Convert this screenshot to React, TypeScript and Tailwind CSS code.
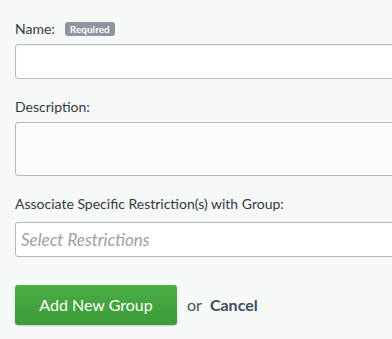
export default function App() {
  return (
    <div
      className="min-h-screen overflow-hidden bg-[#f7f8f8] pl-[15px] pt-[20px] text-[#333a40]"
      style={{ fontFamily: "Lato, 'Open Sans', sans-serif" }}
    >
      <form className="w-[400px]">
        <div className="flex h-[18px] items-center gap-[10px] text-[14px] leading-[18px]">
          <label>Name:</label>
          <span className="rounded-[3px] bg-[#8d969e] px-[5px] text-[10px] font-bold leading-[14px] text-white">
            Required
          </span>
        </div>
        <input
          type="text"
          className="mt-[6px] block h-[35px] w-full rounded-[3px] border border-[#b3b9bd] bg-white shadow-[inset_0_1px_2px_rgba(0,0,0,0.06)]"
        />

        <label className="mt-[19px] block h-[18px] text-[14px] leading-[18px]">Description:</label>
        <textarea className="mt-[6px] block h-[54px] w-full resize-none rounded-[3px] border border-[#b3b9bd] bg-[#fafbfb]" />

        <label className="mt-[19px] block h-[18px] text-[14px] leading-[18px]">
          Associate Specific Restriction(s) with Group:
        </label>
        <div className="mt-[9px] flex h-[35px] w-full items-center rounded-[3px] border border-[#b3b9bd] bg-white px-[5px]">
          <span className="text-[17px] italic text-[#9aa1a6]">Select Restrictions</span>
        </div>

        <div className="mt-[28px] flex items-center">
          <button
            type="button"
            className="h-[40px] w-[162px] rounded-[3px] bg-gradient-to-b from-[#4bae46] to-[#3c9a37] text-[16px] text-white shadow-[0_1px_2px_rgba(0,0,0,0.2)]"
          >
            Add New Group
          </button>
          <span className="ml-[10px] text-[16px] text-[#4a5058]">or</span>
          <a className="ml-[8px] text-[16px] font-bold text-[#3e4c5a]">Cancel</a>
        </div>
      </form>
    </div>
  );
}
